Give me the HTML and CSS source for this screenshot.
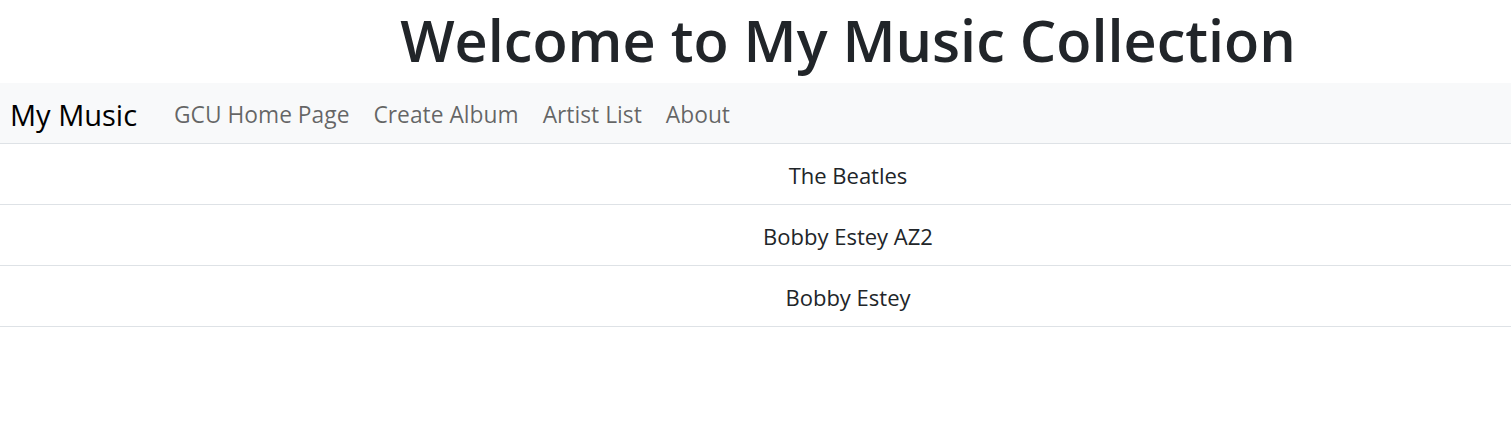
FILE: index.html
```html
<!DOCTYPE html>
<html>
<head>
<meta charset="utf-8">
<link rel="stylesheet" href="styles.css">
</head>
<body>
<h1 class="title">Welcome to My Music Collection</h1>
<nav class="navbar">
  <a class="brand" href="#">My Music</a>
  <ul class="nav">
    <li><a class="nav-link" href="#">GCU Home Page</a></li>
    <li><a class="nav-link" href="#">Create Album</a></li>
    <li><a class="nav-link" href="#">Artist List</a></li>
    <li><a class="nav-link" href="#">About</a></li>
  </ul>
</nav>
<table class="artists">
  <tbody>
    <tr><td>The Beatles</td></tr>
    <tr><td>Bobby Estey AZ2</td></tr>
    <tr><td>Bobby Estey</td></tr>
  </tbody>
</table>
</body>
</html>
```

FILE: styles.css
```css
html, body {
  margin: 0;
  padding: 0;
  background: #fff;
  font-family: "Open Sans", "Noto Sans", sans-serif;
  color: #212529;
}
.title {
  margin: 0;
  height: 83px;
  line-height: 80px;
  font-size: 57.6px;
  font-weight: 600;
  text-align: center;
  padding-left: 185px;
  color: #212529;
}
.navbar {
  display: flex;
  align-items: center;
  box-sizing: border-box;
  height: 61px;
  padding-top: 2px;
  padding-left: 10px;
  background: #f8f9fa;
  border-bottom: 1px solid #dee2e6;
}
.brand {
  font-size: 29px;
  color: #000;
  text-decoration: none;
  margin-right: 25px;
}
.nav {
  display: flex;
  list-style: none;
  margin: 0;
  padding: 0;
}
.nav-link {
  display: block;
  padding: 0 12px;
  font-size: 22.8px;
  color: rgba(0,0,0,.6);
  text-decoration: none;
}
.artists {
  width: 100%;
  border-collapse: collapse;
}
.artists td {
  height: 58px;
  padding: 2px 0 0 185px;
  border-bottom: 1px solid #dee2e6;
  text-align: center;
  font-size: 22px;
  color: #212529;
}
```
